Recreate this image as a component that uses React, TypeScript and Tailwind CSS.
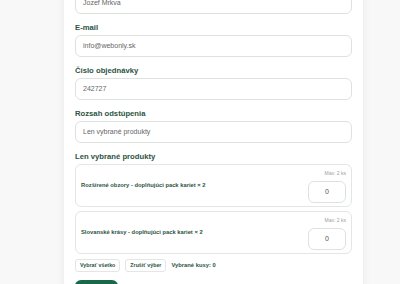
const fields = [
  { label: "", value: "Jozef Mrkva" },
  { label: "E-mail", value: "info@webonly.sk" },
  { label: "Číslo objednávky", value: "242727" },
  { label: "Rozsah odstúpenia", value: "Len vybrané produkty" },
];

const products = [
  "Rozšírené obzory - doplňujúci pack kariet × 2",
  "Slovanské krásy - doplňujúci pack kariet × 2",
];

function Label({ children }: { children: React.ReactNode }) {
  return (
    <div className="text-[7.7px] leading-[11px] font-bold text-[#2c5443] mb-[2px]">{children}</div>
  );
}

export default function App() {
  return (
    <div
      className="w-[400px] h-[284px] overflow-hidden bg-[#f7f8f7]"
      style={{ fontFamily: '"Liberation Sans", Arial, sans-serif' }}
    >
      <div className="ml-[63px] w-[301px] -mt-[21px] bg-white rounded-lg shadow-[0_0_8px_rgba(0,0,0,0.05)] border border-[#f0f2f1] px-[11px] pt-[12px] pb-[20px]">
        <div className="flex flex-col gap-[8px]">
          {fields.map((f, i) => (
            <div key={i}>
              {f.label && <Label>{f.label}</Label>}
              <div className="h-[22px] rounded-md border border-[#dde2df] flex items-center px-[7px] text-[7px] text-[#666]">
                {f.value}
              </div>
            </div>
          ))}
          <div>
            <Label>Len vybrané produkty</Label>
            <div className="flex flex-col gap-[4px]">
              {products.map((p) => (
                <div key={p} className="h-[43px] rounded-md border border-[#e2e6e4] px-[5px] pt-[5px] flex">
                  <div className="flex-1 flex items-center pb-[5px] text-[5.8px] font-bold text-[#2c5443]">
                    {p}
                  </div>
                  <div className="flex flex-col items-end">
                    <div className="text-[5px] leading-[7px] text-[#9aa09d]">Max: 2 ks</div>
                    <div className="mt-[4px] w-[38px] h-[22px] rounded-md border border-[#dde2df] flex items-center justify-center text-[7px] text-[#555]">
                      0
                    </div>
                  </div>
                </div>
              ))}
            </div>
            <div className="flex items-center gap-[5px] mt-[5px]">
              <div className="h-[13px] px-[4px] rounded-[3px] border border-[#e2e6e4] flex items-center text-[5.3px] font-bold text-[#2c5443]">
                Vybrať všetko
              </div>
              <div className="h-[13px] px-[4px] rounded-[3px] border border-[#e2e6e4] flex items-center text-[5.3px] font-bold text-[#2c5443]">
                Zrušiť výber
              </div>
              <div className="text-[5.8px] font-bold text-[#2c5443]">Vybrané kusy: 0</div>
            </div>
            <div className="mt-[8px] w-[43px] h-[18px] rounded-md bg-[#17694a]" />
          </div>
        </div>
      </div>
    </div>
  );
}
